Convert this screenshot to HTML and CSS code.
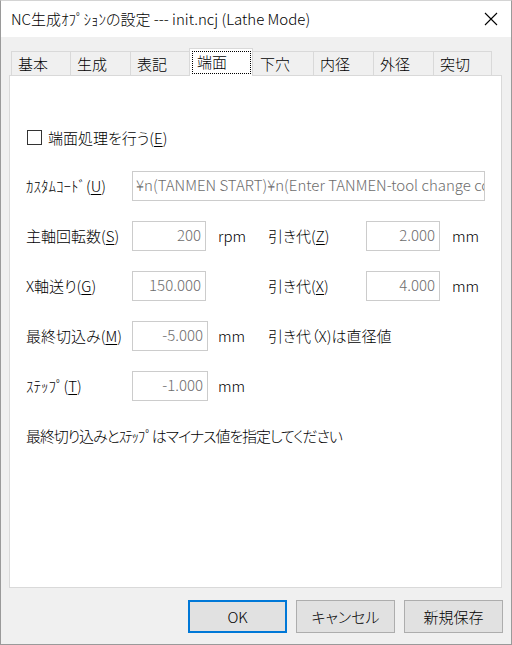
FILE: index.html
```html
<!DOCTYPE html>
<html lang="ja">
<head>
<meta charset="utf-8">
<title>NC生成ｵﾌﾟｼｮﾝの設定</title>
<link rel="stylesheet" href="styles.css">
</head>
<body>
<div class="window">
  <div class="titlebar">
    <span class="title">NC生成ｵﾌﾟｼｮﾝの設定 --- init.ncj (Lathe Mode)</span>
    <svg class="close" width="14" height="14" viewBox="0 0 14 14"><path d="M1 1 L13 13 M13 1 L1 13" stroke="#000" stroke-width="1.1" fill="none"/></svg>
  </div>
  <div class="body">
    <div class="tabs">
      <div class="tab first">基本</div>
      <div class="tab">生成</div>
      <div class="tab">表記</div>
      <div class="tab selected"><span class="focus">端面</span></div>
      <div class="tab after">下穴</div>
      <div class="tab">内径</div>
      <div class="tab">外径</div>
      <div class="tab last">突切</div>
    </div>
    <div class="panel">
      <div class="form">
        <div class="check-row">
          <span class="checkbox"></span>
          <span class="label">端面処理を行う(<u>E</u>)</span>
        </div>

        <div class="label">ｶｽﾀﾑｺｰﾄﾞ(<u>U</u>)</div>
        <div class="field wide">¥n(TANMEN START)¥n(Enter TANMEN-tool change command)</div>

        <div class="label">主軸回転数(<u>S</u>)</div>
        <div class="field num">200</div>
        <div class="unit">rpm</div>
        <div class="label">引き代(<u>Z</u>)</div>
        <div class="field num">2.000</div>
        <div class="unit">mm</div>

        <div class="label">X軸送り(<u>G</u>)</div>
        <div class="field num">150.000</div>
        <div class="unit"></div>
        <div class="label">引き代(<u>X</u>)</div>
        <div class="field num">4.000</div>
        <div class="unit">mm</div>

        <div class="label">最終切込み(<u>M</u>)</div>
        <div class="field num w76">-5.000</div>
        <div class="unit">mm</div>
        <div class="label span3">引き代（X)は直径値</div>

        <div class="label">ｽﾃｯﾌﾟ(<u>T</u>)</div>
        <div class="field num w76">-1.000</div>
        <div class="unit">mm</div>
        <div class="spacer"></div>

        <div class="label note">最終切り込みとｽﾃｯﾌﾟはマイナス値を指定してください</div>
      </div>
    </div>
    <div class="buttons">
      <div class="btn default">OK</div>
      <div class="btn">キャンセル</div>
      <div class="btn">新規保存</div>
    </div>
  </div>
</div>
</body>
</html>
```

FILE: styles.css
```css
* { box-sizing: border-box; }
html, body {
  margin: 0;
  padding: 0;
  background: #f0f0f0;
}
body {
  font-family: "Noto Sans CJK JP", "Noto Sans", sans-serif;
  font-size: 15px;
  font-weight: 300;
  color: #000;
}
.window {
  width: 512px;
  height: 645px;
  border: 1px solid #9a9a9a;
  border-top-color: #d4d4d4;
  display: flex;
  flex-direction: column;
  background: #f0f0f0;
}
.titlebar {
  height: 36px;
  background: #fff;
  display: flex;
  align-items: center;
  padding-left: 10px;
  padding-right: 13px;
  flex: none;
}
.title {
  flex: 1;
  font-size: 15px;
  line-height: 20px;
  padding-bottom: 1px;
  font-feature-settings: "palt";
}
.close { display: block; }
.body {
  flex: 1;
  display: flex;
  flex-direction: column;
}
.tabs {
  display: flex;
  align-items: flex-end;
  height: 27px;
  margin-top: 11px;
  padding-left: 10px;
  position: relative;
  z-index: 1;
}
.tab {
  width: 60px;
  height: 24px;
  border-top: 1px solid #d9d9d9;
  border-left: 1px solid #d9d9d9;
  background: #f0f0f0;
  padding-left: 6px;
  line-height: 23px;
  white-space: nowrap;
}
.tab.first { width: 59px; }
.tab.last { border-right: 1px solid #d9d9d9; width: 59px; }
.tab.after { margin-left: -2px; width: 62px; padding-left: 8px; }
.tab.selected {
  width: 64px;
  height: 28px;
  margin-left: -1px;
  margin-bottom: -1px;
  background: #fff;
  border: 1px solid #d9d9d9;
  border-bottom: none;
  padding: 2px 0 0 2px;
  position: relative;
  z-index: 2;
}
.focus {
  display: block;
  width: 59px;
  height: 23px;
  border: 1px dotted #000;
  padding-left: 4px;
  line-height: 19px;
}
.panel {
  margin-left: 8px;
  width: 493px;
  height: 513px;
  background: #fff;
  border: 1px solid #d9d9d9;
  flex: none;
}
.form {
  display: grid;
  grid-template-columns: 106px 86px 50px 98px 86px 1fr;
  grid-auto-rows: 50px;
  grid-template-rows: 47px;
  padding-top: 38px;
  padding-left: 16px;
  align-items: center;
}
.check-row {
  grid-column: 1 / -1;
  display: flex;
  align-items: center;
}
.checkbox {
  width: 15px;
  height: 15px;
  border: 1px solid #333;
  margin-right: 6px;
  margin-left: 1px;
  background: #fff;
}
.label {
  line-height: 20px;
  white-space: nowrap;
  font-feature-settings: "palt";
}
.label u { text-underline-offset: 2px; }
.field {
  height: 30px;
  width: 74px;
  border: 1px solid #cccccc;
  background: #fff;
  color: #6d6d6d;
  line-height: 26px;
  white-space: nowrap;
  overflow: hidden;
}
.field.num {
  text-align: right;
  padding-right: 4px;
}
.field.w76 { width: 76px; }
.field.wide {
  grid-column: 2 / -1;
  width: 353px;
  height: 30px;
  padding-left: 3px;
  line-height: 25px;
}
.unit {
  line-height: 20px;
}
.span3 { grid-column: 4 / span 3; }
.spacer { grid-column: 4 / span 3; }
.note {
  grid-column: 1 / -1;
  letter-spacing: -1.1px;
}
.buttons {
  display: flex;
  justify-content: flex-end;
  gap: 9px;
  margin-top: 12px;
  padding-right: 8px;
}
.btn {
  width: 99px;
  height: 33px;
  background: #e1e1e1;
  border: 1px solid #adadad;
  display: flex;
  align-items: center;
  justify-content: center;
  line-height: 20px;
  font-feature-settings: "palt";
}
.btn.default {
  border: 2px solid #0078d7;
}
```
